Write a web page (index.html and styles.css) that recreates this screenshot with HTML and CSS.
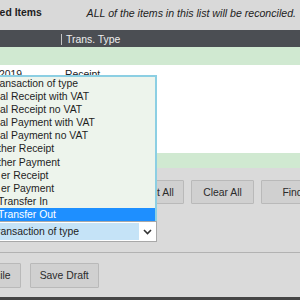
FILE: index.html
```html
<!DOCTYPE html>
<html lang="en">
<head>
<meta charset="utf-8">
<title>Reconcile</title>
<link rel="stylesheet" href="styles.css">
</head>
<body>
<div class="app">
  <header class="titlebar">
    <h1 class="title">Selected Items</h1>
    <p class="note">ALL of the items in this list will be reconciled.</p>
  </header>

  <div class="table">
    <div class="thead">
      <div class="th">Date</div>
      <div class="th th-sep">Trans. Type</div>
    </div>
    <div class="band"></div>
    <div class="tbody">
      <div class="tr">
        <div class="td">01/01/2019</div>
        <div class="td">Receipt</div>
      </div>
    </div>
    <div class="band band-foot"></div>
  </div>

  <div class="actions">
    <button class="btn">Select All</button>
    <button class="btn">Clear All</button>
    <button class="btn">Find</button>
  </div>

  <div class="filter">
    <div class="select-wrap">
      <ul class="dropdown">
        <li class="opt">Transaction of type</li>
        <li class="opt opt-part">al Receipt with VAT</li>
        <li class="opt opt-part">al Receipt no VAT</li>
        <li class="opt opt-part">al Payment with VAT</li>
        <li class="opt opt-part">al Payment no VAT</li>
        <li class="opt">Other Receipt</li>
        <li class="opt">Other Payment</li>
        <li class="opt opt-part2">er Receipt</li>
        <li class="opt opt-part2">er Payment</li>
        <li class="opt opt-t">Transfer In</li>
        <li class="opt opt-t opt-active">Transfer Out</li>
      </ul>
      <div class="select">
        <span class="select-value">Transaction of type</span>
        <span class="select-arrow">
          <svg width="9" height="6" viewBox="0 0 9 6"><polyline points="1,1 4.5,4.5 8,1" fill="none" stroke="#333" stroke-width="1.6"/></svg>
        </span>
      </div>
    </div>
  </div>

  <div class="divider"></div>

  <div class="footer">
    <button class="btn btn-auto">Reconcile</button>
    <button class="btn btn-auto">Save Draft</button>
  </div>

  <div class="statusbar"></div>
</div>
</body>
</html>
```

FILE: styles.css
```css
* { box-sizing: border-box; }

html, body {
  margin: 0;
  padding: 0;
}

body {
  font-family: "Liberation Sans", Arial, sans-serif;
  font-size: 10.4px;
  color: #222;
}

.app {
  width: 300px;
  height: 300px;
  overflow: hidden;
  background: #dadada;
  display: flex;
  flex-direction: column;
}

/* title bar */
.titlebar {
  height: 30px;
  flex: none;
  display: flex;
  align-items: center;
  justify-content: space-between;
  padding: 0 4px 5px 0;
  background: #d9d9d9;
}

.title {
  margin: 0 0 0 -31px;
  font-size: 10.4px;
  font-weight: bold;
  color: #1e1e1e;
  white-space: nowrap;
}

.note {
  margin: 0;
  font-size: 10.6px;
  font-style: italic;
  color: #222;
  white-space: nowrap;
}

/* table */
.table {
  flex: none;
  margin-left: -34px;
  width: calc(100% + 34px);
}

.thead {
  height: 17px;
  display: grid;
  grid-template-columns: 95px 1fr;
  background: #4b4e53;
  color: #eeeeee;
}

.th {
  display: flex;
  align-items: center;
  padding-left: 4px;
  white-space: nowrap;
}

.th-sep {
  margin: 4px 0 2px;
  border-left: 1px solid #c4c4c4;
}

.band {
  height: 18px;
  background: #d0e9d1;
}

.band-foot {
  height: 15px;
}

.tbody {
  height: 88px;
  background: #ffffff;
}

.tr {
  height: 19px;
  display: grid;
  grid-template-columns: 95px 1fr;
  align-items: center;
}

.td {
  padding-left: 4px;
  white-space: nowrap;
  color: #222;
}

/* buttons */
.actions {
  flex: none;
  margin-top: 12px;
  height: 24px;
  display: flex;
  gap: 7px;
  padding-left: 121px;
}

.btn {
  flex: none;
  width: 63px;
  height: 24px;
  padding: 0;
  font-family: inherit;
  font-size: 10.4px;
  color: #2b2b2b;
  background: #d0d0d0;
  border: 1px solid #b9b9b9;
  border-radius: 1px;
  white-space: nowrap;
}

.btn-auto {
  width: auto;
  height: 25px;
  padding: 0 9px;
}

/* filter select */
.filter {
  flex: none;
  margin-top: 17px;
  height: 21px;
}

.select-wrap {
  position: relative;
  margin-left: -14px;
  width: 171px;
  height: 21px;
}

.select {
  height: 21px;
  display: flex;
  background: #ffffff;
  border: 1px solid #a8a8a8;
}

.select-value {
  flex: 1;
  margin: 1px 0 1px 1px;
  padding-left: 3px;
  display: flex;
  align-items: center;
  background: #c5e3f7;
  color: #1e1e1e;
  white-space: nowrap;
}

.select-arrow {
  width: 17px;
  display: flex;
  align-items: center;
  justify-content: center;
}

.dropdown {
  position: absolute;
  left: 0;
  right: 0;
  bottom: 100%;
  margin: 0;
  padding: 0;
  list-style: none;
  background: #edf4ec;
  border: 2px solid #8ccfe3;
  border-left-width: 0;
  border-bottom: 0;
}

.opt {
  height: 13.1px;
  line-height: 13.1px;
  padding-left: 4px;
  white-space: nowrap;
  color: #1e1e1e;
}

.opt-part { padding-left: 14px; }
.opt-part2 { padding-left: 15px; }
.opt-t { padding-left: 12px; }

.opt-active {
  background: #1e8fff;
  color: #ffffff;
}

/* divider + footer */
.divider {
  flex: none;
  margin-top: 10px;
  height: 1px;
  background: #b2b2b2;
}

.footer {
  flex: none;
  margin-top: 10px;
  margin-left: -45px;
  display: flex;
  gap: 9px;
}

.statusbar {
  flex: none;
  margin-top: auto;
  height: 3px;
  background: #454545;
}
```
